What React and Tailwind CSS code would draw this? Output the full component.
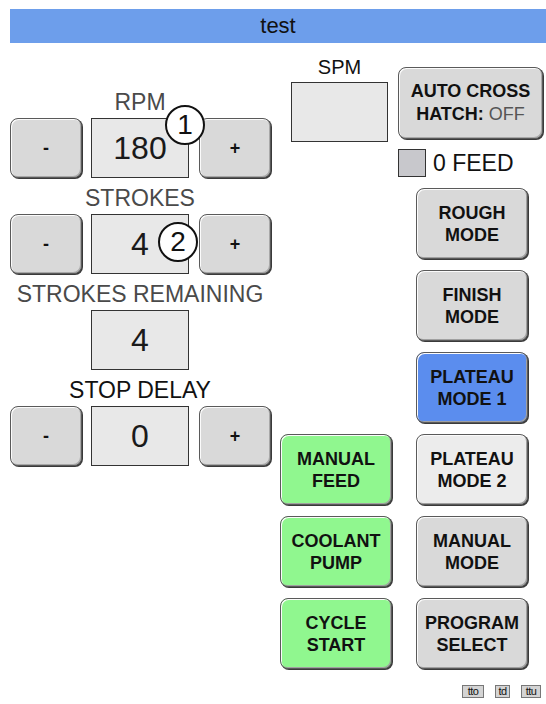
import React from "react";

const font = { fontFamily: '"Liberation Sans", Arial, sans-serif' };

const greyBtn =
  "flex items-center justify-center rounded-[8px] border border-[#5a5a5a] bg-[#d9d9d9] shadow-[inset_1px_1px_0_#fbfbfb,inset_-1px_-1px_0_#a8a8a8,1px_1px_0_#3a3a3a]";

function StepButton({ children }) {
  return (
    <div className={`${greyBtn} w-[72px] h-[60px] text-[18px] font-bold text-[#111]`}>
      {children}
    </div>
  );
}

function ValueBox({ value }) {
  return (
    <div className="w-[98px] h-[60px] border-[1.5px] border-[#333] bg-[#e8e8e8] flex items-center justify-center text-[32px] leading-none text-[#1a1a1a]">
      {value}
    </div>
  );
}

function Label({ children, dark }) {
  return (
    <div
      className={`h-[36px] pt-[7px] w-[260px] text-center text-[23px] leading-[26px] whitespace-nowrap ${
        dark ? "text-[#111]" : "text-[#4a4a4a]"
      }`}
    >
      {children}
    </div>
  );
}

function Badge({ n, className }) {
  return (
    <div
      className={`absolute w-[40px] h-[40px] rounded-full border-2 border-[#111] bg-white flex items-center justify-center text-[28px] leading-none text-[#111] ${className}`}
    >
      {n}
    </div>
  );
}

function StepRow({ value, badge, badgeClass }) {
  return (
    <div className="relative flex items-center h-[60px]">
      <StepButton>-</StepButton>
      <div className="ml-[9px]">
        <ValueBox value={value} />
      </div>
      <div className="ml-[10px]">
        <StepButton>+</StepButton>
      </div>
      {badge && <Badge n={badge} className={badgeClass} />}
    </div>
  );
}

function ModeButton({ lines, tone }) {
  const bg =
    tone === "blue"
      ? "bg-[#5b8dee]"
      : tone === "green"
      ? "bg-[#90f78f]"
      : tone === "light"
      ? "bg-[#ececec]"
      : "bg-[#d9d9d9]";
  return (
    <div
      className={`w-[112px] h-[71px] rounded-[8px] border border-[#5a5a5a] ${bg} shadow-[inset_1px_1px_0_#fbfbfb,inset_-1px_-1px_0_#a0a0a0,1px_1px_0_#3a3a3a] flex flex-col items-center justify-center text-[18px] leading-[22px] font-bold text-[#111]`}
    >
      {lines.map((l) => (
        <span key={l}>{l}</span>
      ))}
    </div>
  );
}

function TinyIcon({ label, w }) {
  return (
    <div
      className={`${w} h-[13px] border border-[#777] bg-[#d4d4d4] flex items-center justify-center text-[11px] leading-none text-[#111] tracking-[-0.5px]`}
    >
      {label}
    </div>
  );
}

export default function App() {
  return (
    <div className="w-[546px] h-[704px] bg-white overflow-hidden" style={font}>
      {/* Title bar */}
      <div className="ml-[10px] mt-[9px] h-[34px] bg-[#6d9eeb] flex items-center justify-center text-[22px] leading-none text-[#111]">
        test
      </div>

      <div className="flex pl-[10px]">
        {/* Left column */}
        <div className="w-[270px] pt-[39px]">
          <Label>RPM</Label>
          <StepRow value="180" badge="1" badgeClass="left-[155px] top-[-13px]" />
          <Label>STROKES</Label>
          <StepRow value="4" badge="2" badgeClass="left-[148px] top-[8px]" />
          <Label>STROKES REMAINING</Label>
          <div className="flex pl-[81px]">
            <ValueBox value="4" />
          </div>
          <Label dark>STOP DELAY</Label>
          <StepRow value="0" />
        </div>

        {/* Right area */}
        <div className="w-[266px]">
          <div className="flex h-[134px] pl-[11px]">
            <div className="w-[97px] mt-[13px]">
              <div className="h-[22px] text-center text-[20px] leading-[22px] text-[#111]">
                SPM
              </div>
              <div className="mt-[4px] h-[60px] border-[1.5px] border-[#333] bg-[#e8e8e8]" />
            </div>
            <div className="ml-[10px] mt-[24px]">
              <div
                className={`${greyBtn} w-[145px] h-[72px] flex-col text-[18px] leading-[23px] font-bold text-[#111]`}
              >
                <span>AUTO CROSS</span>
                <span>
                  HATCH: <span className="font-normal text-[#555]">OFF</span>
                </span>
              </div>
              <div className="mt-[10px] flex items-center">
                <div className="w-[28px] h-[28px] border-[1.5px] border-[#333] bg-[#c8c8cc]" />
                <span className="ml-[7px] text-[23px] leading-none text-[#111]">0 FEED</span>
              </div>
            </div>
          </div>

          <div className="mt-[11px] grid grid-cols-[112px_112px] gap-x-[24px] gap-y-[11px]">
            <div />
            <ModeButton lines={["ROUGH", "MODE"]} />
            <div />
            <ModeButton lines={["FINISH", "MODE"]} />
            <div />
            <ModeButton lines={["PLATEAU", "MODE 1"]} tone="blue" />
            <ModeButton lines={["MANUAL", "FEED"]} tone="green" />
            <ModeButton lines={["PLATEAU", "MODE 2"]} tone="light" />
            <ModeButton lines={["COOLANT", "PUMP"]} tone="green" />
            <ModeButton lines={["MANUAL", "MODE"]} />
            <ModeButton lines={["CYCLE", "START"]} tone="green" />
            <ModeButton lines={["PROGRAM", "SELECT"]} />
          </div>
        </div>
      </div>

      <div className="mt-[16px] flex justify-end pr-[5px] gap-[11px]">
        <TinyIcon label="tto" w="w-[22px]" />
        <TinyIcon label="td" w="w-[15px]" />
        <TinyIcon label="ttu" w="w-[20px]" />
      </div>
    </div>
  );
}
